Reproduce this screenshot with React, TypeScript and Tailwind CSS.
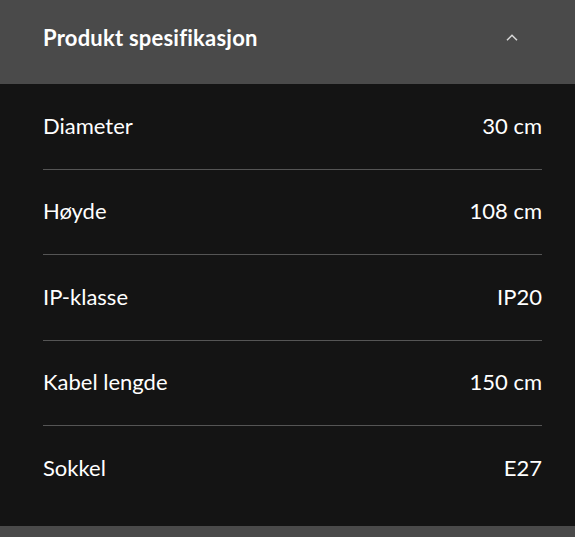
const specs = [
  { label: "Diameter", value: "30 cm" },
  { label: "Høyde", value: "108 cm" },
  { label: "IP-klasse", value: "IP20" },
  { label: "Kabel lengde", value: "150 cm" },
  { label: "Sokkel", value: "E27" },
];

export default function App() {
  return (
    <div className="h-[537px] w-[575px] bg-[#4a4a4a] font-['Lato',sans-serif] text-white">
      <div className="flex h-[84px] items-center justify-between pb-[9px] pl-[43px] pr-[57px]">
        <h2 className="text-[22px] font-bold tracking-[0.01em]">Produkt spesifikasjon</h2>
        <svg width="12" height="7" viewBox="0 0 12 7" fill="none" className="text-[#d8d8d8]">
          <polyline points="1,6.2 6,1.2 11,6.2" stroke="currentColor" strokeWidth="1.5" />
        </svg>
      </div>
      <div className="h-[442px] bg-[#141414] pl-[43px] pr-[33px] pb-[15px]">
        {specs.map((s, i) => (
          <div
            key={s.label}
            className={`flex h-[85.5px] items-center justify-between pb-[2px] text-[22px] ${
              i < specs.length - 1 ? "border-b border-[#555]" : ""
            }`}
          >
            <span>{s.label}</span>
            <span>{s.value}</span>
          </div>
        ))}
      </div>
    </div>
  );
}
